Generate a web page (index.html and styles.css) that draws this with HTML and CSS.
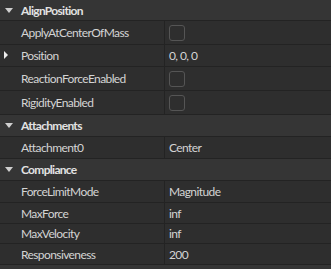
FILE: index.html
```html
<!DOCTYPE html>
<html>
<head>
<meta charset="utf-8">
<link rel="stylesheet" href="styles.css">
</head>
<body>
<div class="panel">
  <div class="row header h21"><span class="caret down"></span><span class="hname">AlignPosition</span></div>
  <div class="row prop h24"><div class="name">ApplyAtCenterOfMass</div><div class="value"><span class="box"></span></div></div>
  <div class="row prop h22"><div class="name"><span class="caret right"></span>Position</div><div class="value">0, 0, 0</div></div>
  <div class="row prop h24"><div class="name">ReactionForceEnabled</div><div class="value"><span class="box"></span></div></div>
  <div class="row prop h24"><div class="name">RigidityEnabled</div><div class="value"><span class="box"></span></div></div>
  <div class="row header h22"><span class="caret down"></span><span class="hname">Attachments</span></div>
  <div class="row prop h22"><div class="name">Attachment0</div><div class="value">Center</div></div>
  <div class="row header h22"><span class="caret down"></span><span class="hname">Compliance</span></div>
  <div class="row prop h22"><div class="name">ForceLimitMode</div><div class="value">Magnitude</div></div>
  <div class="row prop h21"><div class="name">MaxForce</div><div class="value">inf</div></div>
  <div class="row prop h20"><div class="name">MaxVelocity</div><div class="value">inf</div></div>
  <div class="row prop h21"><div class="name">Responsiveness</div><div class="value">200</div></div>
</div>
</body>
</html>
```
FILE: styles.css
```css
html, body {
  margin: 0;
  padding: 0;
  background: #353535;
  width: 331px;
  height: 269px;
  overflow: hidden;
}
.panel {
  display: flex;
  flex-direction: column;
  font-family: "Lato", "Noto Sans", sans-serif;
  font-size: 12px;
  letter-spacing: -0.6px;
  color: #d4d4d4;
}
.row {
  display: flex;
  align-items: stretch;
  box-sizing: border-box;
  border-bottom: 1px solid #232323;
}
.h20 { height: 20px; }
.h21 { height: 21px; }
.h22 { height: 22px; }
.h24 { height: 24px; }
.header {
  background: #353535;
  align-items: center;
  position: relative;
}
.hname {
  padding-left: 21px;
  font-weight: bold;
  letter-spacing: -0.7px;
  color: #e2e2e2;
}
.prop {
  background: #2e2e2e;
}
.name {
  width: 165px;
  box-sizing: border-box;
  padding-left: 21px;
  display: flex;
  align-items: center;
  border-right: 1px solid #232323;
  position: relative;
}
.value {
  flex: 1;
  display: flex;
  align-items: center;
  padding-left: 4px;
}
.box {
  width: 16px;
  height: 16px;
  box-sizing: border-box;
  border: 1px solid #555;
  border-radius: 3px;
}
.caret {
  position: absolute;
  width: 0;
  height: 0;
}
.caret.down {
  left: 5px;
  top: 8px;
  border-left: 4px solid transparent;
  border-right: 4px solid transparent;
  border-top: 5px solid #cfcfcf;
}
.caret.right {
  left: 4px;
  top: 6px;
  border-top: 4px solid transparent;
  border-bottom: 4px solid transparent;
  border-left: 4px solid #ededed;
}
```
